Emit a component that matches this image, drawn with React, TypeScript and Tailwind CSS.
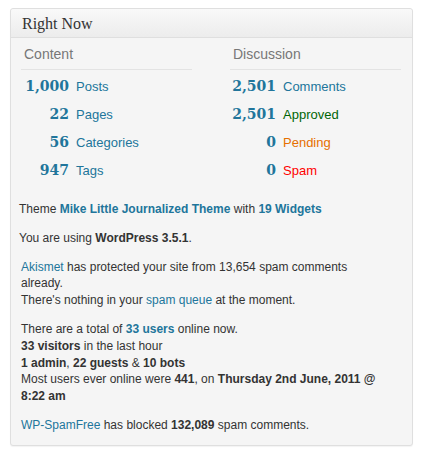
import React from "react";

const sans = { fontFamily: '"Liberation Sans", Arial, sans-serif' } as const;

type Row = { n: string; label: string; color: string };

const content: Row[] = [
  { n: "1,000", label: "Posts", color: "text-[#21759b]" },
  { n: "22", label: "Pages", color: "text-[#21759b]" },
  { n: "56", label: "Categories", color: "text-[#21759b]" },
  { n: "947", label: "Tags", color: "text-[#21759b]" },
];

const discussion: Row[] = [
  { n: "2,501", label: "Comments", color: "text-[#21759b]" },
  { n: "2,501", label: "Approved", color: "text-[#006505]" },
  { n: "0", label: "Pending", color: "text-[#e66f00]" },
  { n: "0", label: "Spam", color: "text-[#ff0000]" },
];

function Table({ title, rows, numW }: { title: string; rows: Row[]; numW: string }) {
  return (
    <div className="w-[171px]">
      <div className="pt-[8px] pb-[7px] pl-[3px] text-[14px] leading-[16px] text-[#777] border-b border-[#e3e3e3]">
        {title}
      </div>
      <div className="mt-[2px]">
        {rows.map((r) => (
          <div key={r.label} className="flex items-baseline h-[28px]">
            <span
              className={`${numW} text-right text-[14px] font-bold leading-[28px] text-[#21759b] oldstyle-nums`}
              style={{ fontFamily: '"DejaVu Serif", Georgia, serif' }}
            >
              {r.n}
            </span>
            <span className={`ml-[7px] text-[13px] leading-[28px] ${r.color}`}>{r.label}</span>
          </div>
        ))}
      </div>
    </div>
  );
}

export default function App() {
  return (
    <div className="bg-white w-[422px] h-[456px] pt-[8px]" style={sans}>
      <div className="ml-[10px] w-[403px] border border-[#dfdfdf] rounded-[3px] bg-[#f5f5f5] shadow-[0_1px_1px_rgba(0,0,0,0.05)]">
        <div className="h-[29px] border-b border-[#dfdfdf] rounded-t-[3px] bg-gradient-to-b from-[#f9f9f9] to-[#ececec] pl-[11px]">
          <span
            className="text-[16px] leading-[29px] text-[#333]"
            style={{ fontFamily: '"Liberation Serif", "Times New Roman", serif' }}
          >
            Right Now
          </span>
        </div>
        <div className="pl-[10px] pr-[11px]">
          <div className="flex gap-[38px]">
            <Table title="Content" rows={content} numW="w-[48px]" />
            <Table title="Discussion" rows={discussion} numW="w-[46px]" />
          </div>
          <div className="pt-[17px] pb-[11px] w-[366px] text-[12px] leading-[16.8px] text-[#333]">
            <p className="-ml-[2px]">
              Theme <a className="text-[#21759b] font-bold">Mike Little Journalized Theme</a> with{" "}
              <a className="text-[#21759b] font-bold">19 Widgets</a>
            </p>
            <p className="mt-[12px] -ml-[2px]">
              You are using <span className="font-bold">WordPress 3.5.1</span>.
            </p>
            <p className="mt-[12px]">
              <a className="text-[#21759b]">Akismet</a> has protected your site from 13,654 spam comments already.
              <br />
              There's nothing in your <a className="text-[#21759b]">spam queue</a> at the moment.
            </p>
            <p className="mt-[12px]">
              There are a total of <a className="text-[#21759b] font-bold">33 users</a> online now.
              <br />
              <b>33 visitors</b> in the last hour
              <br />
              <b>1 admin</b>, <b>22 guests</b> &amp; <b>10 bots</b>
              <br />
              Most users ever online were <b>441</b>, on <b>Thursday 2nd June, 2011 @ 8:22 am</b>
            </p>
            <p className="mt-[12px]">
              <a className="text-[#21759b]">WP-SpamFree</a> has blocked <b>132,089</b> spam comments.
            </p>
          </div>
        </div>
      </div>
    </div>
  );
}
